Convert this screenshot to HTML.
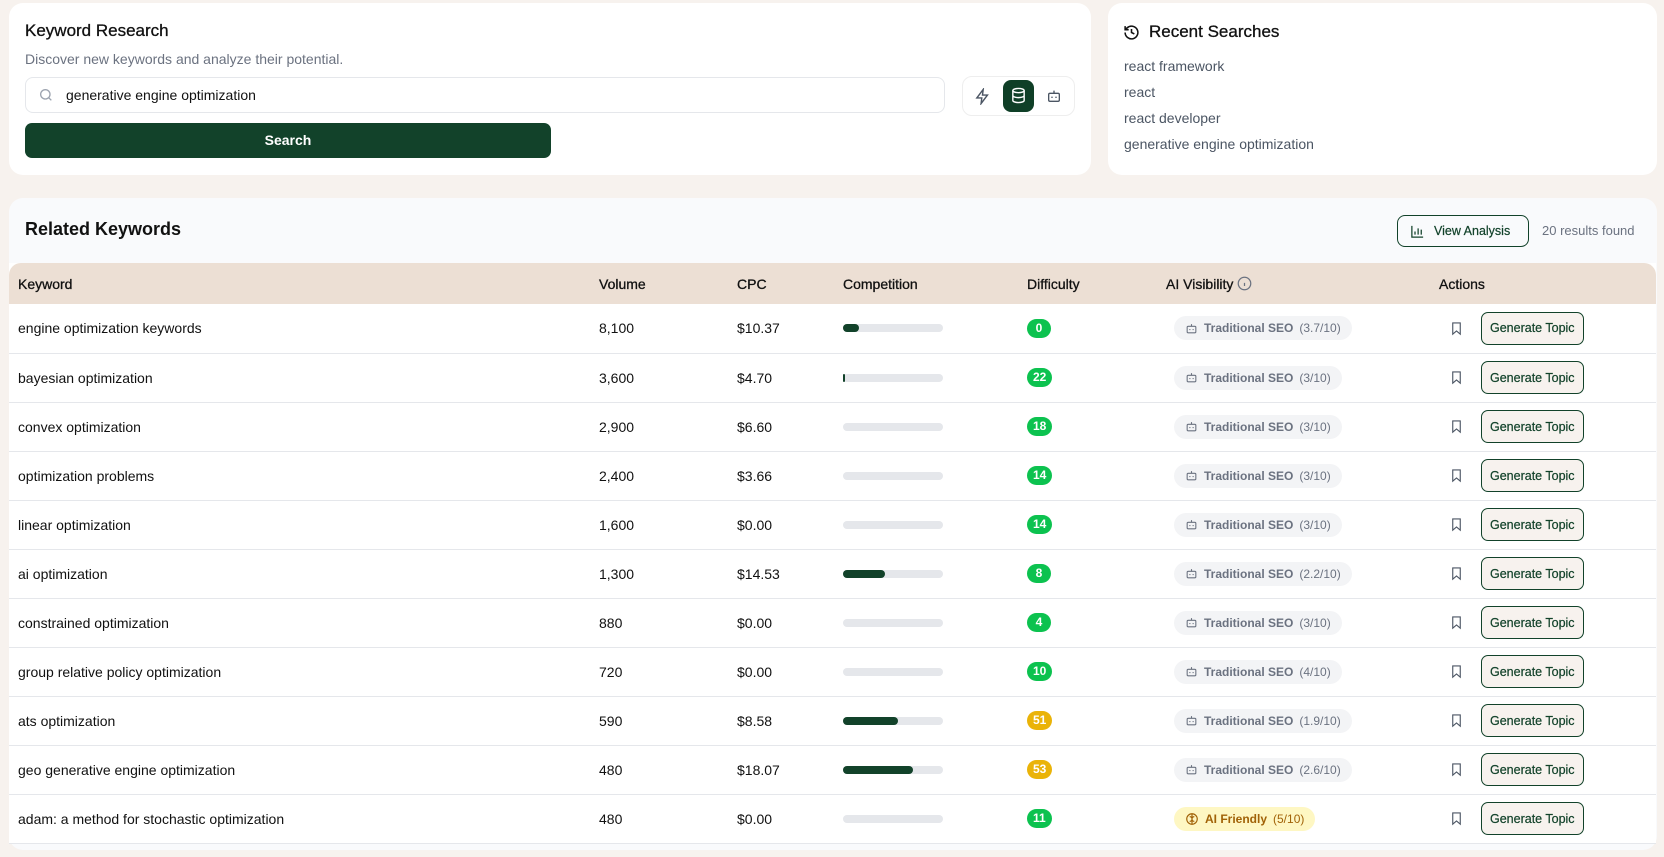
<!DOCTYPE html>
<html><head><meta charset="utf-8"><style>
*{box-sizing:border-box;margin:0;padding:0}
body{width:1664px;height:857px;background:#f7f2ee;font-family:"Liberation Sans",sans-serif;color:#111;position:relative;overflow:hidden}
.card{position:absolute;background:#fff;border-radius:14px}
.abs{position:absolute}
.t{font-size:17px;font-weight:400;color:#111;-webkit-text-stroke:0.3px #111}
.rs{font-size:14px;color:#4b5563;position:absolute;left:16px}
table{border-collapse:collapse;position:absolute;left:9px;top:263px;width:1647px;background:#fff}
th{background:#ecdfd4;height:41px;text-align:left;font-size:14px;font-weight:400;-webkit-text-stroke:0.3px #111;color:#111;padding:0}
td{height:49px;border-bottom:1px solid #e5e7eb;font-size:14px;padding:0;vertical-align:middle}
.bar{width:100px;height:8px;background:#e5e7eb;border-radius:4px;position:relative}
.bar i{position:absolute;left:0;top:0;bottom:0;background:#12422a;border-radius:4px}
.d{display:inline-block;height:19px;line-height:19px;min-width:24px;padding:0 6px;border-radius:10px;color:#fff;font-size:12px;font-weight:700;text-align:center}
.g{background:#0cc24f}.y{background:#eab308}
.ai{display:inline-flex;align-items:center;gap:6px;height:24px;padding:0 11px;border-radius:12px;background:#f3f4f6;color:#6b7280;font-size:12px;font-weight:700}
.ai span{font-weight:400}
.af{background:#fef7c3;color:#a16207}
.gt{display:inline-flex;align-items:center;height:33px;padding:0 8px;border:1.5px solid #12422a;border-radius:7px;background:#f7f2ee;color:#12422a;font-size:12.5px;font-weight:400;-webkit-text-stroke:0.2px #12422a;margin-left:17px;vertical-align:middle}
.bm{display:inline-block;vertical-align:middle;margin-left:10px}
</style></head><body>
<div class="card" style="left:9px;top:3px;width:1082px;height:172px">
 <div class="abs t" style="left:16px;top:18px">Keyword Research</div>
 <div class="abs" style="left:16px;top:48px;font-size:14px;color:#6b7280">Discover new keywords and analyze their potential.</div>
 <div class="abs" style="left:16px;top:74px;width:920px;height:36px;border:1px solid #e5e7eb;border-radius:8px">
  <svg class="abs" style="left:12px;top:9px" width="16" height="16" viewBox="0 0 24 24" fill="none" stroke="#9ca3af" stroke-width="2"><circle cx="11" cy="11" r="7"/><path d="M20 20l-4-4"/></svg>
  <div class="abs" style="left:40px;top:9px;font-size:14px">generative engine optimization</div>
 </div>
 <div class="abs" style="left:953px;top:73px;width:113px;height:40px;border:1px solid #eee;border-radius:10px">
  <svg class="abs" style="left:11px;top:11px" width="17" height="17" viewBox="0 0 24 24" fill="none" stroke="#4b5563" stroke-width="2"><path d="M13 2L4 14h7l-1 8 9-12h-7z"/></svg>
  <div class="abs" style="left:40px;top:3px;width:31px;height:32px;background:#0f3f27;border-radius:8px"><svg class="abs" style="left:7px;top:7px" width="17" height="17" viewBox="0 0 24 24" fill="none" stroke="#fff" stroke-width="2"><ellipse cx="12" cy="5" rx="8" ry="3"/><path d="M4 5v14c0 1.7 3.6 3 8 3s8-1.3 8-3V5M4 12c0 1.7 3.6 3 8 3s8-1.3 8-3"/></svg></div>
  <svg class="abs" style="left:83px;top:11px" width="16" height="16" viewBox="0 0 24 24" fill="none" stroke="#4b5563" stroke-width="2"><rect x="4" y="8" width="16" height="12" rx="2"/><path d="M12 4v4M9 13v2M15 13v2"/></svg>
 </div>
 <div class="abs" style="left:16px;top:120px;width:526px;height:35px;background:#12422a;border-radius:7px;color:#fff;font-size:14px;font-weight:700;text-align:center;line-height:35px">Search</div>
</div>
<div class="card" style="left:1108px;top:3px;width:549px;height:172px">
 <svg class="abs" style="left:15px;top:21px" width="17" height="17" viewBox="0 0 24 24" fill="none" stroke="#111" stroke-width="2.2"><path d="M3 12a9 9 0 1 0 3-6.7L3 8"/><path d="M3 3v5h5M12 7v5l4 2"/></svg>
 <div class="abs t" style="left:41px;top:19px">Recent Searches</div>
 <div class="rs" style="top:55px">react framework</div>
 <div class="rs" style="top:81px">react</div>
 <div class="rs" style="top:107px">react developer</div>
 <div class="rs" style="top:133px">generative engine optimization</div>
</div>
<div class="card" style="left:9px;top:198px;width:1648px;height:652px;background:#f9fafc">
 <div class="abs" style="left:16px;top:21px;font-size:18px;font-weight:700">Related Keywords</div>
 <div class="abs" style="left:1388px;top:17px;width:132px;height:32px;border:1.5px solid #12422a;border-radius:8px;font-size:12.5px;color:#12422a;-webkit-text-stroke:0.2px #12422a;display:flex;align-items:center;padding-left:36px">
  <svg class="abs" style="left:12px;top:8px" width="15" height="15" viewBox="0 0 24 24" fill="none" stroke="#12422a" stroke-width="2"><path d="M3 3v18h18M8 17v-5M13 17V7M18 17v-8"/></svg>View Analysis</div>
 <div class="abs" style="left:1533px;top:25px;font-size:13px;color:#6b7280">20 results found</div>
</div>
<table>
<colgroup><col style="width:590px"><col style="width:138px"><col style="width:106px"><col style="width:184px"><col style="width:139px"><col style="width:273px"><col></colgroup>
<tr><th style="padding-left:9px;border-top-left-radius:12px">Keyword</th><th>Volume</th><th>CPC</th><th>Competition</th><th>Difficulty</th><th>AI Visibility <svg width="15" height="15" viewBox="0 0 24 24" fill="none" stroke="#6b7280" stroke-width="2" style="vertical-align:-2px"><circle cx="12" cy="12" r="10"/><path d="M12 16v-5M12 8h0"/></svg></th><th style="border-top-right-radius:12px">Actions</th></tr>
</table>
<table style="top:304px" id="tb">
<colgroup><col style="width:590px"><col style="width:138px"><col style="width:106px"><col style="width:184px"><col style="width:139px"><col style="width:273px"><col></colgroup>
</table>
<script>
const rows=[["engine optimization keywords","8,100","$10.37",16,"0","g","3.7"],["bayesian optimization","3,600","$4.70",2,"22","g","3"],["convex optimization","2,900","$6.60",0,"18","g","3"],["optimization problems","2,400","$3.66",0,"14","g","3"],["linear optimization","1,600","$0.00",0,"14","g","3"],["ai optimization","1,300","$14.53",42,"8","g","2.2"],["constrained optimization","880","$0.00",0,"4","g","3"],["group relative policy optimization","720","$0.00",0,"10","g","4"],["ats optimization","590","$8.58",55,"51","y","1.9"],["geo generative engine optimization","480","$18.07",70,"53","y","2.6"],["adam: a method for stochastic optimization","480","$0.00",0,"11","g","AF"]];
const bot='<svg width="13" height="13" viewBox="0 0 24 24" fill="none" stroke="#6b7280" stroke-width="2"><rect x="4" y="8" width="16" height="12" rx="2"/><path d="M12 4v4M9 13v2M15 13v2"/></svg>';
const brain='<svg width="14" height="14" viewBox="0 0 24 24" fill="none" stroke="#a16207" stroke-width="2"><circle cx="12" cy="12" r="9"/><path d="M12 3v18M8 8c2 0 4 1 4 4M16 8c-2 0-4 1-4 4M8 16c2 0 4-1 4-4M16 16c-2 0-4-1-4-4"/></svg>';
const bm='<svg class="bm" width="15" height="17" viewBox="0 0 24 24" fill="none" stroke="#4b5563" stroke-width="1.8"><path d="M6 3h12v18l-6-5-6 5z"/></svg>';
let h='';
for(const r of rows){
 const ai=r[6]==="AF"?`<span class="ai af">${brain}<b>AI Friendly</b> <span>(5/10)</span></span>`:`<span class="ai">${bot}Traditional SEO <span>(${r[6]}/10)</span></span>`;
 h+=`<tr><td style="padding-left:9px">${r[0]}</td><td>${r[1]}</td><td>${r[2]}</td><td><div class="bar"><i style="width:${r[3]}%"></i></div></td><td><span class="d ${r[5]}">${r[4]}</span></td><td style="padding-left:8px">${ai}</td><td>${bm}<span class="gt">Generate Topic</span></td></tr>`;
}
document.getElementById('tb').insertAdjacentHTML('beforeend',h);
</script>
</body></html>
